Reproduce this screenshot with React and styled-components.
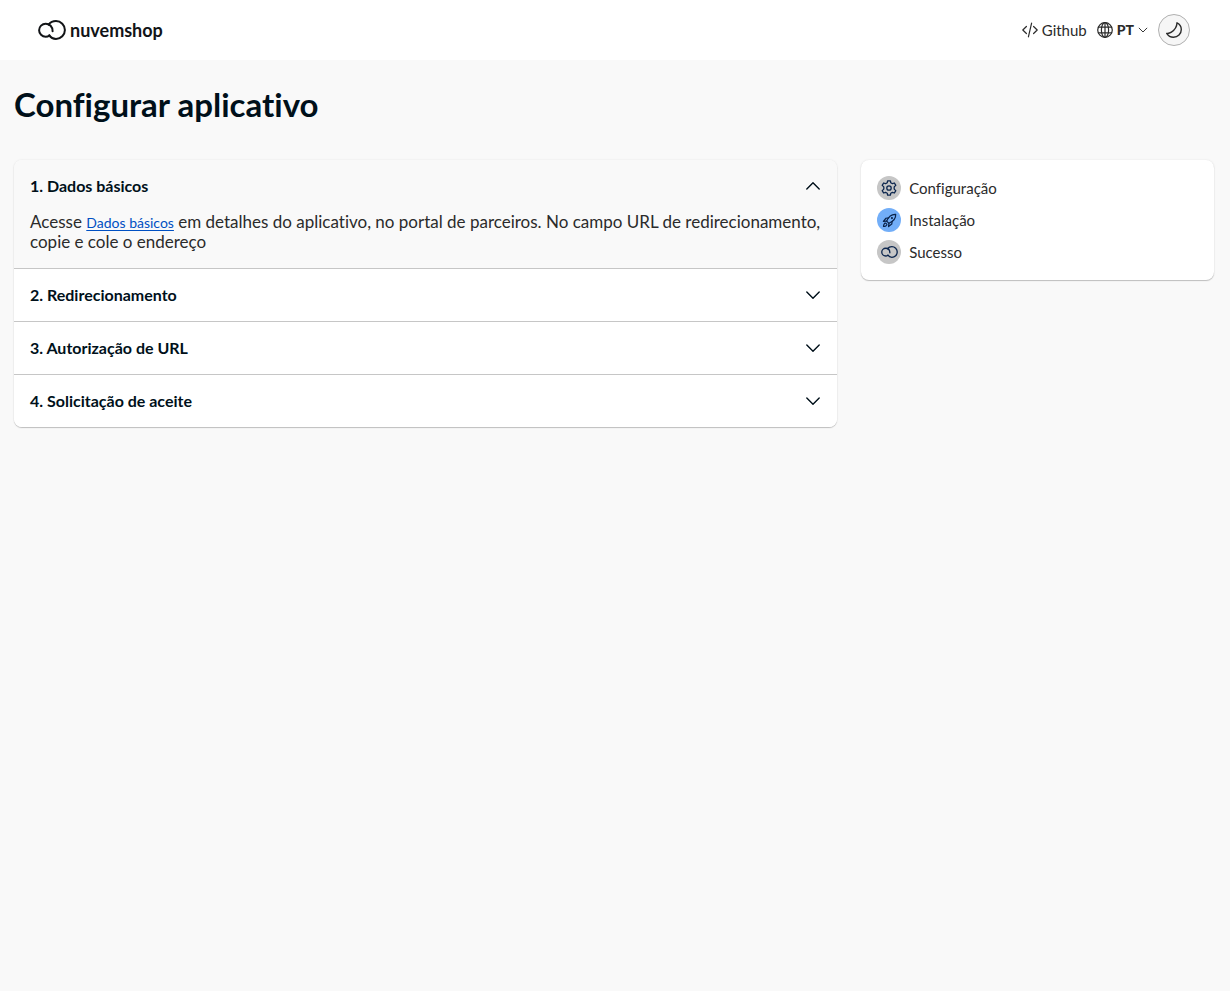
import React, { useState } from "react";
import styled, { createGlobalStyle } from "styled-components";

const GlobalStyle = createGlobalStyle`
  *, *::before, *::after { box-sizing: border-box; }
  body {
    margin: 0;
    background: #f9f9f9;
    color: #2b2b2b;
    font-family: Lato, "Open Sans", sans-serif;
    font-size: 15px;
    font-variant-ligatures: none;
    line-height: 20px;
  }
  button { font: inherit; color: inherit; cursor: pointer; }
`;

const Page = styled.div`
  min-height: 100vh;
`;

const TopBar = styled.header`
  display: flex;
  align-items: center;
  justify-content: space-between;
  height: 60px;
  padding: 0 40px 0 38px;
  background: #ffffff;
`;

const Brand = styled.a`
  display: flex;
  align-items: center;
  gap: 4px;
  color: #121417;
  font-size: 18px;
  font-weight: 700;
  text-decoration: none;
`;

const Actions = styled.nav`
  display: flex;
  align-items: center;
  gap: 10px;
`;

const ActionLink = styled.a`
  display: flex;
  align-items: center;
  gap: 4px;
  color: inherit;
  text-decoration: none;
`;

const LanguageButton = styled.button`
  display: flex;
  align-items: center;
  gap: 4px;
  padding: 0;
  border: 0;
  background: none;
  font-size: 14px;
  font-weight: 900;
`;

const ThemeButton = styled.button`
  display: flex;
  align-items: center;
  justify-content: center;
  width: 32px;
  height: 32px;
  padding: 0;
  border: 1px solid #b0b0b0;
  border-radius: 50%;
  background: #f6f6f6;
`;

const Main = styled.main`
  max-width: 1230px;
  margin: 0 auto;
  padding: 24px 16px 24px 14px;
`;

const Title = styled.h1`
  margin: 0 0 36px;
  color: #00101a;
  font-size: 33px;
  font-weight: 700;
  line-height: 40px;
`;

const Columns = styled.div`
  display: grid;
  grid-template-columns: 7fr 3fr;
  align-items: start;
  gap: 24px;
`;

const Card = styled.section`
  overflow: hidden;
  border-radius: 8px;
  background: #ffffff;
  box-shadow: 0 0 2px rgba(136, 136, 136, 0.2), 0 1px 1px rgba(70, 70, 70, 0.3);
`;

const AccordionItem = styled.div`
  background: ${({ $open }) => ($open ? "#f9f9f9" : "#ffffff")};
  & + & { border-top: 1px solid #c6c6c6; }
`;

const AccordionHeading = styled.h2`
  margin: 0;
  font-size: 16px;
`;

const AccordionButton = styled.button`
  display: flex;
  align-items: center;
  justify-content: space-between;
  width: 100%;
  padding: 16px;
  border: 0;
  background: none;
  color: #00101a;
  font-weight: 700;
  text-align: left;
`;

const AccordionBody = styled.p`
  margin: 0;
  padding: 0 16px 16px;
  font-size: 17px;
`;

const TextLink = styled.a`
  color: #0050c3;
  font-size: 14px;
  line-height: 16px;
  text-underline-offset: 2px;
`;

const Steps = styled.ol`
  display: flex;
  flex-direction: column;
  gap: 8px;
  margin: 0;
  padding: 16px;
  list-style: none;
`;

const Step = styled.li`
  display: flex;
  align-items: center;
  gap: 8px;
`;

const StepIcon = styled.span`
  display: flex;
  align-items: center;
  justify-content: center;
  width: 24px;
  height: 24px;
  border-radius: 50%;
  background: ${({ $active }) => ($active ? "#72aef8" : "#c6c6c6")};
  color: #0b254d;
`;

function Icon({ size = 16, stroke = 1.2, children }) {
  return (
    <svg
      width={size}
      height={size}
      viewBox="0 0 16 16"
      fill="none"
      stroke="currentColor"
      strokeWidth={stroke}
      strokeLinecap="round"
      strokeLinejoin="round"
      aria-hidden="true"
    >
      {children}
    </svg>
  );
}

function Logo({ width, height, stroke }) {
  return (
    <svg
      width={width}
      height={height}
      viewBox="0 0 28 20"
      fill="none"
      stroke="currentColor"
      strokeWidth={stroke}
      strokeLinecap="round"
      strokeLinejoin="round"
      aria-hidden="true"
    >
      <path d="M11.4 15.4C10.3 16.3 9 16.7 7.7 16.7A6.6 6.5 0 0 1 7.7 3.7C11.7 3.7 14.6 6.8 14.6 11.2" />
      <path d="M10.6 4.6C12.2 2.5 14.9 1.1 18 1.1A8.9 8.9 0 0 1 18 18.9C15.3 18.9 12.7 17.5 11.3 15.4" />
    </svg>
  );
}

const icons = {
  code: <path d="M4.4 4.5.8 8l3.6 3.5M11.6 4.5 15.2 8l-3.6 3.5M9.6 1.2 6.4 14.8" />,
  globe: (
    <>
      <circle cx="8" cy="8" r="7.3" />
      <ellipse cx="8" cy="8" rx="3.6" ry="7.3" />
      <path d="M8 .7v14.6M1.4 5.2h13.2M1.4 10.8h13.2" />
    </>
  ),
  moon: <path d="M11 .8C13.7 2 15.3 4.6 15.3 7.5c0 4.3-3.5 7.8-7.8 7.8-2.8 0-5.4-1.500-6.800-3.900 1.500.2 3.200-.2 4.700-1.200C8.400 8.200 10.900 4.600 11 .8Z" />,
  down: <path d="m1.8 5 6.2 6.2L14.2 5" />,
  up: <path d="m1.8 11 6.2-6.2 6.2 6.2" />,
  gear: (
    <>
      <circle cx="8" cy="8" r="2.2" />
      <path d="M6.6.8h2.8l.4 2 1.6.9 2-.7 1.4 2.4-1.6 1.5v2.2l1.6 1.5-1.4 2.4-2-.7-1.6.9-.4 2H6.6l-.4-2-1.6-.9-2 .7-1.4-2.4 1.6-1.5V6.9L1.2 5.4 2.6 3l2 .7 1.6-.9Z" />
    </>
  ),
  rocket: (
    <>
      <path d="M14.6 1.4C10 1.1 7 3.9 5 8.6L7.4 11C12.1 9 14.9 6 14.6 1.4Z" />
      <circle cx="10.6" cy="5.4" r=".5" />
      <path d="M7 5.2 4.2 5.6 1.5 9l3.5-.4M10.8 9l-.4 2.8L7 14.5l.4-3.5" />
      <path d="M4.7 11.3a1.4 1.4 0 0 0-2.3.3C1.8 12.5 1.6 13.4 1.6 14.4c1 0 1.9-.2 2.8-.8a1.4 1.4 0 0 0 .3-2.3Z" />
    </>
  ),
};

const steps = [
  { label: "Configuração", icon: <Icon stroke={1.3}>{icons.gear}</Icon> },
  { label: "Instalação", icon: <Icon size={15} stroke={1.3}>{icons.rocket}</Icon>, active: true },
  { label: "Sucesso", icon: <Logo width={17} height={12} stroke={2.2} /> },
];

const sections = [
  {
    title: "1. Dados básicos",
    body: (
      <>
        Acesse <TextLink href="#dados-basicos">Dados básicos</TextLink> em detalhes do aplicativo, no portal de
        parceiros. No campo URL de redirecionamento, copie e cole o endereço
      </>
    ),
  },
  { title: "2. Redirecionamento" },
  { title: "3. Autorização de URL" },
  { title: "4. Solicitação de aceite" },
];

export default function App() {
  const [open, setOpen] = useState(0);

  return (
    <Page>
      <GlobalStyle />
      <TopBar>
        <Brand href="#inicio">
          <Logo width={28} height={20} stroke={2} />
          nuvemshop
        </Brand>
        <Actions>
          <ActionLink href="#github">
            <Icon>{icons.code}</Icon>
            Github
          </ActionLink>
          <LanguageButton type="button" aria-haspopup="listbox">
            <Icon>{icons.globe}</Icon>
            PT
            <Icon size={10} stroke={1.5}>{icons.down}</Icon>
          </LanguageButton>
          <ThemeButton type="button" aria-label="Tema escuro">
            <Icon stroke={1.4}>{icons.moon}</Icon>
          </ThemeButton>
        </Actions>
      </TopBar>
      <Main>
        <Title>Configurar aplicativo</Title>
        <Columns>
          <Card>
            {sections.map(({ title, body }, index) => (
              <AccordionItem key={title} $open={open === index}>
                <AccordionHeading>
                  <AccordionButton
                    type="button"
                    aria-expanded={open === index}
                    onClick={() => setOpen(open === index ? -1 : index)}
                  >
                    {title}
                    <Icon stroke={1.4}>{open === index ? icons.up : icons.down}</Icon>
                  </AccordionButton>
                </AccordionHeading>
                {open === index && body && <AccordionBody>{body}</AccordionBody>}
              </AccordionItem>
            ))}
          </Card>
          <Card>
            <Steps>
              {steps.map(({ label, icon, active }) => (
                <Step key={label} aria-current={active ? "step" : undefined}>
                  <StepIcon $active={active}>{icon}</StepIcon>
                  {label}
                </Step>
              ))}
            </Steps>
          </Card>
        </Columns>
      </Main>
    </Page>
  );
}
